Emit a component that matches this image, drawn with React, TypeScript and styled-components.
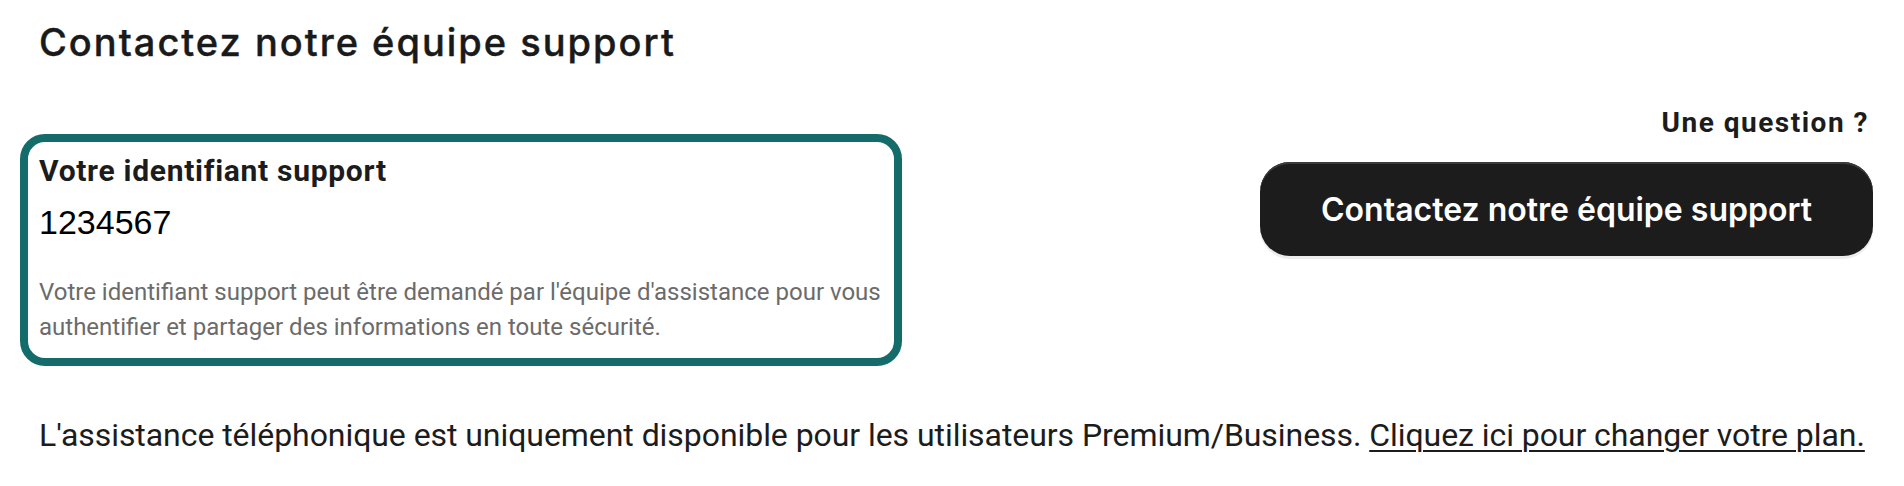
import React from 'react';
import styled, { createGlobalStyle } from 'styled-components';

const GlobalStyle = createGlobalStyle`
  html, body {
    margin: 0;
    padding: 0;
    background: #ffffff;
  }

  body {
    font-family: Roboto, 'Liberation Sans', Arial, sans-serif;
    color: #1c1c1c;
  }
`;

const Page = styled.div`
  padding: 20px 31px 0 20px;
`;

const PageTitle = styled.h2`
  font-family: Inter, 'Noto Sans', sans-serif;
  font-size: 38px;
  line-height: 44px;
  font-weight: 500;
  letter-spacing: 2px;
  margin: 0 0 0 19px;
  color: #1a1a1a;
  -webkit-text-stroke: 0.4px #1a1a1a;
`;

const TopRow = styled.div`
  display: flex;
  justify-content: space-between;
  align-items: flex-start;
  margin-top: 44px;
`;

const IdentifierCard = styled.div`
  box-sizing: border-box;
  width: 882px;
  margin-top: 26px;
  padding: 11px 11px 13px 11px;
  border: 8px solid #136b6a;
  border-radius: 25px;
`;

const CardTitle = styled.div`
  font-size: 30px;
  line-height: 35px;
  font-weight: 700;
  letter-spacing: 0.7px;
`;

const IdentifierValue = styled.div`
  margin-top: 15px;
  font-family: 'Liberation Sans', Arial, sans-serif;
  font-size: 34px;
  line-height: 38px;
  color: #000000;
`;

const CardHint = styled.p`
  margin: 34px 0 0;
  font-size: 24px;
  line-height: 35px;
  color: #6b6b6b;
`;

const HelpColumn = styled.div`
  display: flex;
  flex-direction: column;
  align-items: flex-end;
`;

const HelpLabel = styled.div`
  font-size: 28px;
  line-height: 30px;
  font-weight: 700;
  letter-spacing: 1.5px;
  padding-right: 4px;
`;

const SupportButton = styled.button`
  box-sizing: border-box;
  margin-top: 24px;
  width: 613px;
  height: 94px;
  border: none;
  border-radius: 30px;
  background: #1c1c1c;
  color: #ffffff;
  font-family: Inter, 'Noto Sans', sans-serif;
  font-size: 32px;
  font-weight: 600;
  cursor: pointer;
  box-shadow: inset 0 2px 0 #3a3a3a, 0 3px 0 #ececec;
`;

const Notice = styled.p`
  margin: 50px 0 0 19px;
  font-size: 32px;
  line-height: 38px;
  letter-spacing: -0.06px;
  color: #1c1c1c;
`;

const PlanLink = styled.a`
  color: inherit;
  text-decoration: underline;
  text-underline-offset: 4px;
  text-decoration-thickness: 2px;
  cursor: pointer;
`;

const App: React.FC = () => {
  return (
    <Page>
      <GlobalStyle />
      <PageTitle>Contactez notre équipe support</PageTitle>

      <TopRow>
        <IdentifierCard>
          <CardTitle>Votre identifiant support</CardTitle>
          <IdentifierValue>1234567</IdentifierValue>
          <CardHint>
            Votre identifiant support peut être demandé par l'équipe
            d'assistance pour vous authentifier et partager des informations en
            toute sécurité.
          </CardHint>
        </IdentifierCard>

        <HelpColumn>
          <HelpLabel>Une question ?</HelpLabel>
          <SupportButton>Contactez notre équipe support</SupportButton>
        </HelpColumn>
      </TopRow>

      <Notice>
        L'assistance téléphonique est uniquement disponible pour les
        utilisateurs Premium/Business.{' '}
        <PlanLink>Cliquez ici pour changer votre plan.</PlanLink>
      </Notice>
    </Page>
  );
};

export default App;
